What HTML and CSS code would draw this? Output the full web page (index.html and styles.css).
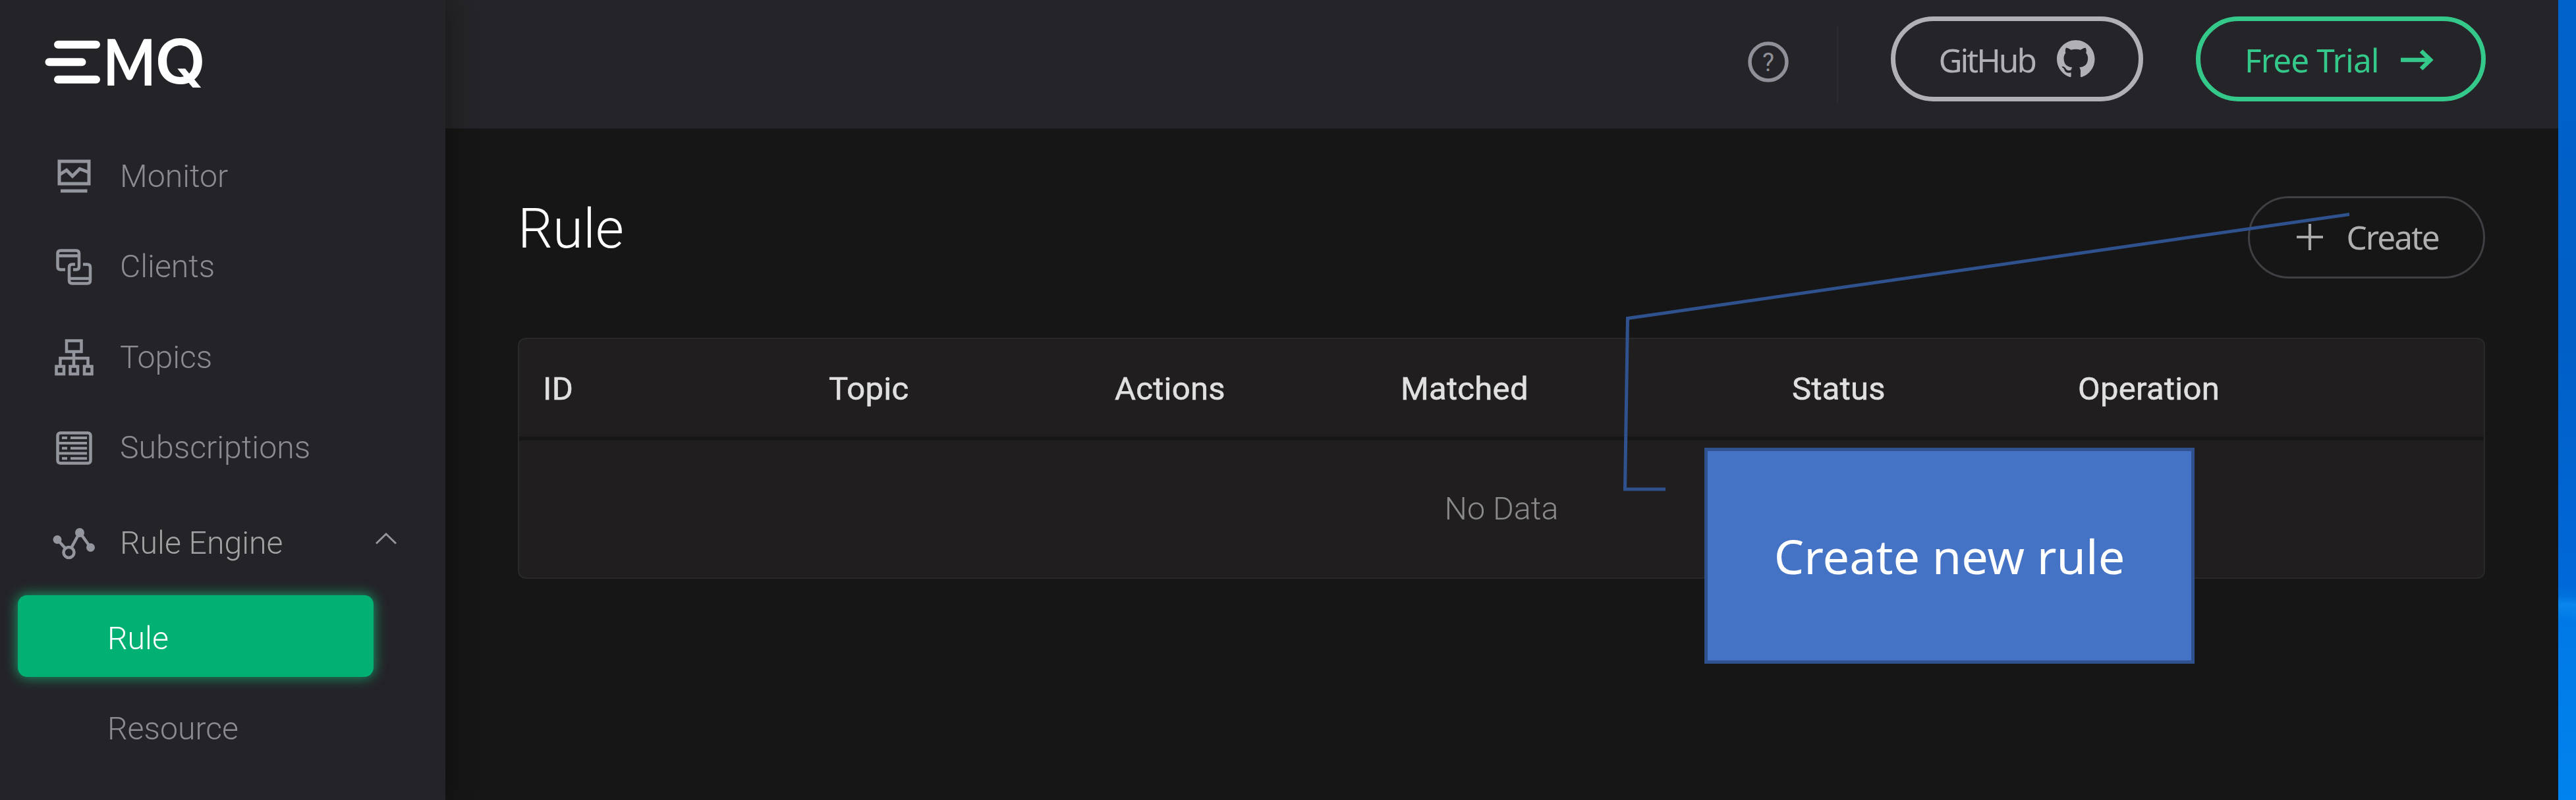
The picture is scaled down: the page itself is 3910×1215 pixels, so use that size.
FILE: index.html
```html
<!DOCTYPE html>
<html lang="en">
<head>
<meta charset="utf-8">
<title>Rule - EMQ</title>
<link rel="stylesheet" href="styles.css">
</head>
<body>
<div class="screen">
  <aside class="sidebar">
    <div class="logo">
      <svg width="260" height="160" viewBox="60 15 260 160">
        <g fill="none" stroke="#fff" stroke-width="12" stroke-linecap="round">
          <path d="M88 67.8H146M74.5 94.2H124.500M88 120.700H146"/>
        </g>
        <text class="logo-m" transform="translate(156.500 129.500) scale(.865 1)">M</text>
        <text class="logo-q" transform="translate(235 127) scale(1.020 .960)">Q</text>
      </svg>
    </div>
    <nav class="menu">
      <a class="item">
        <svg class="icon" viewBox="80 235.500 64 64"><rect x="90" y="245.500" width="45" height="34"/><path d="M90 266L101 259L110 268L121 257L134 262M92 290.500H132.500"/></svg>
        <span>Monitor</span>
      </a>
      <a class="item">
        <svg class="icon" viewBox="80 373 64 64"><g stroke-width="4.500"><path d="M99 409.500H92Q87.500 409.500 87.500 405V385Q87.500 380.500 92 380.500H115.500Q120 380.500 120 385V405Q120 409.500 115.500 409.500H111M87.500 388.500H120"/><path d="M114 401.500H109.500Q105 401.500 105 406V426Q105 430.500 109.500 430.500H132.500Q137 430.500 137 426V406Q137 401.500 132.500 401.500H126M105 423H137"/></g></svg>
        <span>Clients</span>
      </a>
      <a class="item">
        <svg class="icon" viewBox="80 510.500 64 64"><g stroke-width="4.500"><rect x="101" y="518" width="22.500" height="16.500"/><path d="M112 535V556M91.500 556V544.500H133.500V556"/><rect x="85.500" y="557" width="11.500" height="11.500"/><rect x="106.500" y="557" width="11.500" height="11.500"/><rect x="128" y="557" width="11.500" height="11.500"/></g></svg>
        <span>Topics</span>
      </a>
      <a class="item">
        <svg class="icon" viewBox="80 648 64 64"><g stroke-width="4.500"><rect x="87.500" y="657.500" width="50" height="46" rx="4"/><path d="M94 665H102M107 665H132M89 673H132M94 680.700H102M107 680.700H132M89 688.500H132M94 696.300H102M107 696.300H132" stroke-width="4"/></g></svg>
        <span>Subscriptions</span>
      </a>
      <a class="item parent">
        <svg class="icon rule-icon" viewBox="80 792.500 64 64"><path d="M87 819L99 832M108.500 831L121 808L137.500 831" stroke-width="4.500"/><circle cx="104.500" cy="838.500" r="8" stroke-width="4.500"/><g fill="#94969e" stroke="none"><circle cx="87" cy="819" r="6.500"/><circle cx="121" cy="808.500" r="7"/><circle cx="137.500" cy="831" r="6.500"/></g></svg>
        <span>Rule Engine</span>
        <svg class="chevron" width="34" height="20" viewBox="0 0 34 20"><path d="M2 17.500L17 3L32 17.500"/></svg>
      </a>
      <a class="sub active">Rule</a>
      <a class="sub">Resource</a>
    </nav>
  </aside>
  <div class="page">
    <header class="topbar">
      <svg class="help" width="62" height="62" viewBox="0 0 62 62"><circle cx="31" cy="31" r="28"/><text x="31" y="44.500" text-anchor="middle">?</text></svg>
      <div class="divider"></div>
      <a class="pill github">
        <span>GitHub</span>
        <svg width="57.500" height="57.500" viewBox="0 0 16 16"><path fill="#b0b0b5" d="M8 0C3.580 0 0 3.580 0 8c0 3.540 2.290 6.530 5.470 7.590.4.070.55-.17.55-.38 0-.19-.01-.82-.01-1.490-2.010.37-2.530-.49-2.690-.94-.09-.23-.48-.94-.82-1.130-.28-.15-.68-.52-.01-.53.63-.01 1.080.58 1.230.82.72 1.210 1.870.87 2.330.66.070-.52.280-.87.510-1.070-1.780-.2-3.640-.89-3.640-3.950 0-.87.310-1.590.82-2.150-.08-.2-.36-1.020.08-2.120 0 0 .67-.21 2.200.82.64-.18 1.320-.27 2-.27s1.360.09 2 .27c1.530-1.040 2.200-.82 2.200-.82.44 1.100.16 1.920.08 2.120.51.56.82 1.270.82 2.150 0 3.070-1.870 3.750-3.650 3.950.29.25.54.73.54 1.480 0 1.070-.01 1.930-.01 2.200 0 .21.15.46.55.38A8.010 8.010 0 0 0 16 8c0-4.420-3.580-8-8-8z"/></svg>
      </a>
      <a class="pill trial">
        <span>Free Trial</span>
        <svg width="50" height="32" viewBox="0 0 50 32"><path d="M0 16H45M31 2.500L45 16L31 29.500" fill="none" stroke="#34c98b" stroke-width="6.500"/></svg>
      </a>
    </header>
    <main class="content">
      <div class="heading">
        <h1>Rule</h1>
        <a class="create">
          <svg width="40" height="40" viewBox="0 0 40 40"><path d="M20 0V40M0 20H40" stroke="#a9a9a9" stroke-width="4.200"/></svg>
          <span>Create</span>
        </a>
      </div>
      <section class="table">
        <div class="row head">
          <span>ID</span><span>Topic</span><span>Actions</span><span>Matched</span><span>Status</span><span>Operation</span>
        </div>
        <div class="empty">No Data</div>
      </section>
    </main>
  </div>
  <div class="desktop"></div>
  <svg class="leader" width="1120" height="440" viewBox="2456 315 1120 440"><path d="M3566 325.500L2470.500 483.500L2466.500 743H2528" fill="none" stroke="#2f528f" stroke-width="5"/></svg>
  <div class="callout">Create new rule</div>
</div>
</body>
</html>
```
FILE: styles.css
```css
* { box-sizing: border-box; }

body {
  margin: 0;
  background: #161616;
  font-family: Roboto, "Liberation Sans", sans-serif;
}

.screen {
  position: relative;
  display: flex;
  width: 3910px;
  height: 1215px;
  overflow: hidden;
}

/* Sidebar */
.sidebar {
  z-index: 1;
  flex: none;
  width: 676px;
  background: #242328;
  box-shadow: 0 0 44px rgba(0, 0, 0, .42);
}
.logo { height: 198.500px; padding: 15px 0 0 60px; }
.logo svg { display: block; overflow: visible; }
.logo text { fill: #fff; font-size: 98px; }
.logo-m { font-family: Lato, sans-serif; font-weight: 700; }
.logo-q { font-family: Inter, sans-serif; font-weight: 600; }

.menu { display: flex; flex-direction: column; }
.item {
  display: flex;
  align-items: center;
  height: 137.500px;
  padding: 0 73px 0 80px;
  color: #8b8b90;
  font-size: 48.200px;
  font-weight: 300;
}
.item span { flex: 1; margin-left: 38px; }
.icon { width: 64px; height: 64px; fill: none; stroke: #94969e; stroke-width: 5; }
.rule-icon { overflow: visible; }
.parent { height: 152px; color: #a2a2a5; }
.chevron { margin-top: -13px; fill: none; stroke: #96969a; stroke-width: 3; }
.sub {
  display: flex;
  align-items: center;
  height: 137.500px;
  margin-top: 10px;
  padding-left: 163px;
  color: #8b8b90;
  font-size: 48.200px;
  font-weight: 300;
}
.sub.active {
  height: 124px;
  width: 540px;
  margin: 3px 0 0 27px;
  padding: 7px 0 0 136px;
  border-radius: 14px;
  background: #01b173;
  box-shadow: 0 0 20px rgba(22, 190, 125, .85);
  color: #fff;
}

/* Top bar */
.page { flex: 1; min-width: 0; display: flex; flex-direction: column; }
.topbar {
  display: flex;
  align-items: flex-start;
  justify-content: flex-end;
  height: 195px;
  padding: 24.500px 110px 0 0;
  background: #252428;
}
.help { margin-top: 38px; fill: none; stroke: #8f9098; stroke-width: 5.500; }
.help text { fill: #8f9098; stroke: none; font: 400 38px Roboto, sans-serif; }
.divider { width: 2px; height: 119px; margin: 14.500px 80.500px 0 73px; background: #2d2c31; }
.pill {
  display: flex;
  align-items: center;
  height: 129.500px;
  border: 7.500px solid;
  border-radius: 65px;
  font: 400 49.500px "Noto Sans", sans-serif;
  white-space: nowrap;
}
.pill span { width: 150px; margin-top: 3px; }
.github { width: 382.500px; padding-left: 65.500px; color: #b0b0b5; letter-spacing: -3px; }
.github svg { margin-left: 29.500px; }
.trial { width: 440px; margin-left: 80.500px; padding-left: 67px; color: #34c98b; letter-spacing: -.900px; }
.trial span { width: 204px; }
.trial svg { margin: 4px 0 0 33px; }

/* Content */
.content { padding: 102.500px 111px 0 110px; }
.heading { display: flex; justify-content: space-between; align-items: flex-start; }
h1 { margin: 0; color: #fff; font-size: 83.500px; font-weight: 300; line-height: 100px; }
.create {
  display: flex;
  align-items: center;
  width: 360px;
  height: 125px;
  padding-left: 71px;
  border: 3px solid #3f3f44;
  border-radius: 63px;
  color: #b0b0b0;
  font: 400 49.500px "Noto Sans", sans-serif;
  letter-spacing: -2px;
}
.create span { margin-left: 35.500px; }

.table {
  height: 365.500px;
  margin-top: 90.500px;
  border: 2.500px solid #292929;
  border-radius: 12px;
  background: #201e1f;
}
.row {
  display: grid;
  grid-template-columns: 434px 434px 434px 594px 434px 1fr;
  align-items: center;
  height: 154px;
  padding: 3px 0 0 36px;
  border-bottom: 6px solid #171617;
  color: #e0e0e0;
  font-size: 49px;
  font-weight: 400;
  letter-spacing: .300px;
  -webkit-text-stroke: .600px #e0e0e0;
}
.empty {
  display: flex;
  align-items: center;
  justify-content: center;
  height: 206px;
  color: #8a8a8c;
  font-size: 48.500px;
  font-weight: 300;
}

/* Desktop wallpaper visible at the window's right edge */
.desktop {
  flex: none;
  width: 27px;
  background: linear-gradient(184deg, #0062cb 0%, #005fc6 42%, #0068d8 73%, #0072dc 74.500%, #0a86ec 75.500%, #0079e6 77.500%, #0083ee 100%);
}

/* Annotation */
.leader { position: absolute; left: 2456px; top: 315px; z-index: 2; }
.callout {
  position: absolute;
  z-index: 2;
  left: 2587px;
  top: 680px;
  display: flex;
  align-items: center;
  justify-content: center;
  width: 744px;
  height: 328px;
  border: 5px solid #2f528f;
  background: #4472c4;
  color: #fff;
  font: 400 72px "Noto Sans", sans-serif;
}
```
